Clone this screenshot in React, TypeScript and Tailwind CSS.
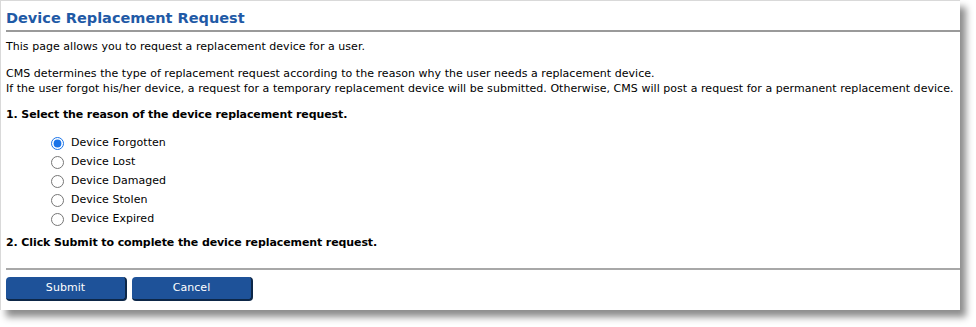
import { useState } from "react";

const reasons = [
  "Device Forgotten",
  "Device Lost",
  "Device Damaged",
  "Device Stolen",
  "Device Expired",
];

export default function App() {
  const [reason, setReason] = useState("Device Forgotten");

  return (
    <div className="w-[976px] h-[327px] bg-white font-['DejaVu_Sans',Verdana,sans-serif] text-[11px] tracking-[0.04px] text-black">
      <div className="w-[960px] h-[310px] bg-white border-t border-l border-[#d9d9d9] shadow-[6px_7px_7px_rgba(0,0,0,0.45)] pl-[5px] flex flex-col">
        <h1 className="text-[14.5px] tracking-normal font-bold text-[#1f5aa6] leading-[20px] pt-[7px] pb-[2px] border-b-2 border-[#9a9a9a]">
          Device Replacement Request
        </h1>
        <p className="mt-[7px] leading-[15px]">
          This page allows you to request a replacement device for a user.
        </p>
        <p className="mt-[12px] leading-[15px]">
          CMS determines the type of replacement request according to the reason
          why the user needs a replacement device.
          <br />
          If the user forgot his/her device, a request for a temporary replacement
          device will be submitted. Otherwise, CMS will post a request for a
          permanent replacement device.
        </p>
        <p className="mt-[11px] font-bold tracking-[-0.1px] leading-[15px]">
          1. Select the reason of the device replacement request.
        </p>
        <div className="mt-[12px] ml-[45px] flex flex-col">
          {reasons.map((r) => (
            <label key={r} className="flex items-center h-[19px] gap-[7px]">
              <input
                type="radio"
                name="reason"
                checked={reason === r}
                onChange={() => setReason(r)}
                className="w-[13px] h-[13px] m-0 accent-[#1a73e8]"
              />
              <span>{r}</span>
            </label>
          ))}
        </div>
        <p className="mt-[6px] font-bold tracking-[-0.1px] leading-[15px]">
          2. Click Submit to complete the device replacement request.
        </p>
        <div className="mt-[18px] border-t-2 border-[#a8a8a8]" />
        <div className="mt-[7px] flex gap-[5px]">
          <button className="w-[121px] h-[24px] rounded-[4px] bg-[#1e5299] border-r-2 border-b-2 border-[#0d2748] text-white text-[11px]">
            Submit
          </button>
          <button className="w-[121px] h-[24px] rounded-[4px] bg-[#1e5299] border-r-2 border-b-2 border-[#0d2748] text-white text-[11px]">
            Cancel
          </button>
        </div>
      </div>
    </div>
  );
}
